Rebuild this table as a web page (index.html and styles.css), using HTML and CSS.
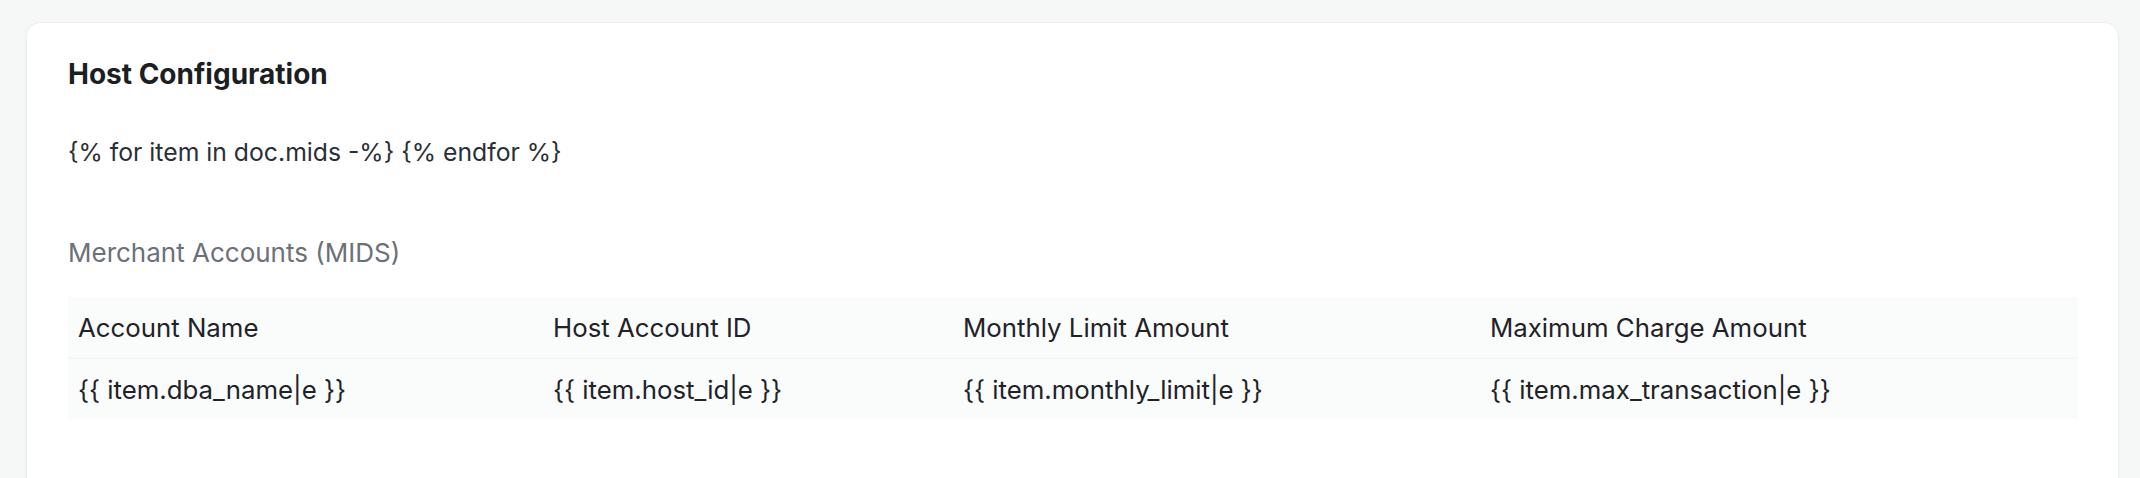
FILE: index.html
```html
<!DOCTYPE html>
<html>
<head>
<meta charset="utf-8">
<link rel="stylesheet" href="styles.css">
</head>
<body>
<div class="card">
  <h2 class="title">Host Configuration</h2>
  <p class="loop">{% for item in doc.mids -%} {% endfor %}</p>
  <div class="section-label">Merchant Accounts (MIDS)</div>
  <table class="mids">
    <colgroup>
      <col class="c1"><col class="c2"><col class="c3"><col class="c4">
    </colgroup>
    <thead>
      <tr><th>Account Name</th><th>Host Account ID</th><th>Monthly Limit Amount</th><th>Maximum Charge Amount</th></tr>
    </thead>
    <tbody>
      <tr><td>{{ item.dba_name|e }}</td><td>{{ item.host_id|e }}</td><td>{{ item.monthly_limit|e }}</td><td>{{ item.max_transaction|e }}</td></tr>
    </tbody>
  </table>
</div>
</body>
</html>
```
FILE: styles.css
```css
html, body {
  margin: 0;
  background: #f6f7f7;
}
body {
  padding: 23px 22px 0 27px;
  font-family: Inter, "Noto Sans", sans-serif;
  color: #1f2328;
}
.card {
  background: #ffffff;
  border-radius: 14px;
  box-shadow: 0 0 0 1px rgba(0,0,0,0.025), 0 1px 4px rgba(0,0,0,0.05);
  padding: 34px 40px 80px 41px;
}
.title {
  margin: 0;
  font-size: 28px;
  line-height: 34px;
  font-weight: 700;
  color: #1b1f24;
}
.loop {
  margin: 43px 0 0;
  font-size: 24.75px;
  line-height: 36px;
  color: #2a2f36;
}
.section-label {
  margin-top: 65px;
  font-size: 26px;
  line-height: 36px;
  color: #6b7079;
}
.mids {
  margin-top: 26px;
  width: 100%;
  border-collapse: collapse;
  table-layout: fixed;
  font-size: 25.8px;
  color: #1f2328;
}
.c1 { width: 475px; }
.c2 { width: 410px; }
.c3 { width: 527px; }
.c4 { width: auto; }
.mids th, .mids td {
  text-align: left;
  font-weight: 400;
  padding: 0 10px;
  height: 60px;
  background: #fafbfb;
  white-space: nowrap;
}
.mids thead tr {
  border-bottom: 2px solid #f3f5f6;
}
```
